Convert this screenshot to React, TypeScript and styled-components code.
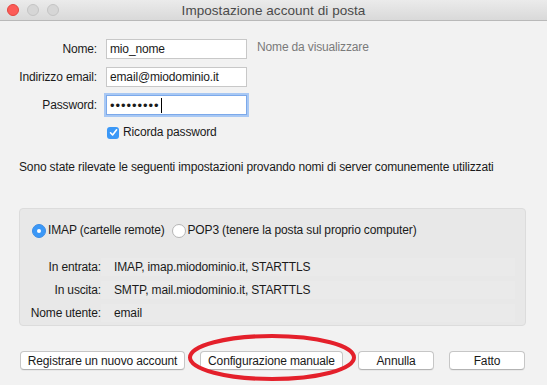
import React from "react";
import styled, { createGlobalStyle } from "styled-components";

const GlobalStyle = createGlobalStyle`
  html, body {
    margin: 0;
    padding: 0;
    background: #f2f2f2;
  }
  body {
    font-family: "Liberation Sans", Arial, sans-serif;
    font-size: 12px;
    line-height: 15px;
    letter-spacing: -0.15px;
    color: #1a1a1a;
  }
`;

const Window = styled.div`
  position: relative;
  width: 547px;
  height: 385px;
  background: #f2f2f2;
  overflow: hidden;
`;

const TitleBar = styled.div`
  position: relative;
  height: 21px;
  background: linear-gradient(#ebebeb, #d9d9d9);
  border-bottom: 1px solid #b9b9b9;
  box-sizing: border-box;
  display: flex;
  align-items: center;
  justify-content: center;
`;

const Lights = styled.div`
  position: absolute;
  left: 7px;
  top: 4px;
  display: flex;
  gap: 8px;
`;

const Light = styled.span<{ $color: string; $edge: string }>`
  width: 12px;
  height: 12px;
  border-radius: 50%;
  box-sizing: border-box;
  background: ${(p) => p.$color};
  border: 1px solid ${(p) => p.$edge};
`;

const Title = styled.div`
  font-size: 13.5px;
  letter-spacing: 0.05px;
  color: #4a4a4a;
`;

const Content = styled.div`
  padding: 18px 21px 0 19px;
`;

const Form = styled.div`
  display: grid;
  grid-template-columns: 78px 141px auto;
  column-gap: 9px;
  row-gap: 8px;
  align-items: center;
`;

const Label = styled.div`
  text-align: right;
  white-space: nowrap;
`;

const Field = styled.div<{ $focus?: boolean }>`
  height: 20px;
  box-sizing: border-box;
  background: #fff;
  border: 1px solid ${(p) => (p.$focus ? "#7ca9ea" : "#c8c8c8")};
  box-shadow: ${(p) => (p.$focus ? "0 0 0 2px #a8c8f4" : "none")};
  padding: 0 3px;
  display: flex;
  align-items: center;
`;

const Dots = styled.span`
  font-size: 13px;
  letter-spacing: 0.95px;
`;

const Caret = styled.span`
  width: 1px;
  height: 15px;
  background: #000;
  margin-left: 1px;
`;

const Hint = styled.div`
  color: #7a7a7a;
  margin-left: 1px;
  margin-top: -4px;
`;

const CheckRow = styled.div`
  grid-column: 2 / 4;
  display: flex;
  align-items: center;
  gap: 4px;
  margin-top: 2px;
  margin-left: 1px;
`;

const Check = styled.span`
  width: 12px;
  height: 12px;
  border-radius: 3px;
  background: #3b98f7;
  display: flex;
  align-items: center;
  justify-content: center;
`;

const Info = styled.p`
  margin: 20px 0 0 0;
  white-space: nowrap;
`;

const Panel = styled.div`
  margin-top: 33px;
  height: 118px;
  background: #e8e8e8;
  border: 1px solid #dcdcdc;
  border-radius: 4px;
  box-sizing: border-box;
  padding: 14px 10px 0 12px;
`;

const RadioRow = styled.div`
  display: flex;
  align-items: center;
`;

const Radio = styled.span<{ $on?: boolean }>`
  width: 14px;
  height: 14px;
  border-radius: 50%;
  box-sizing: border-box;
  background: ${(p) => (p.$on ? "#3b98f7" : "#fff")};
  border: 1px solid ${(p) => (p.$on ? "#3b8de6" : "#b5b5b5")};
  display: flex;
  align-items: center;
  justify-content: center;
  margin-right: 2px;
  &::after {
    content: "";
    display: ${(p) => (p.$on ? "block" : "none")};
    width: 4px;
    height: 4px;
    border-radius: 50%;
    background: #fff;
  }
`;

const RadioText = styled.span`
  margin-right: 7px;
`;

const Details = styled.div`
  margin-top: 20px;
  margin-left: -12px;
  display: grid;
  grid-template-columns: 81px 1fr;
  row-gap: 5px;
`;

const DLabel = styled.div`
  text-align: right;
  height: 18px;
  line-height: 18px;
`;

const DValue = styled.div`
  height: 18px;
  line-height: 18px;
  padding-left: 13px;
  background: #eaeaea;
`;

const Buttons = styled.div`
  display: flex;
  gap: 15px;
  margin-top: 25px;
  margin-left: 1px;
`;

const Button = styled.button<{ $w: number }>`
  width: ${(p) => p.$w}px;
  height: 19px;
  padding: 0;
  background: #fff;
  border: 1px solid #c6c6c6;
  border-bottom-color: #b3b3b3;
  border-radius: 4px;
  box-shadow: 0 1px 0 rgba(0, 0, 0, 0.04);
  font-family: "Liberation Sans", Arial, sans-serif;
  font-size: 12px;
  letter-spacing: -0.15px;
  white-space: nowrap;
  color: #1a1a1a;
`;

const Mark = styled.svg`
  position: absolute;
  left: 186px;
  top: 332px;
  pointer-events: none;
`;

export default function App() {
  return (
    <Window>
      <GlobalStyle />
      <TitleBar>
        <Lights>
          <Light $color="#fc5b57" $edge="#e2463f" />
          <Light $color="#d6d6d6" $edge="#c4c4c4" />
          <Light $color="#d6d6d6" $edge="#c4c4c4" />
        </Lights>
        <Title>Impostazione account di posta</Title>
      </TitleBar>
      <Content>
        <Form>
          <Label>Nome:</Label>
          <Field>mio_nome</Field>
          <Hint>Nome da visualizzare</Hint>
          <Label>Indirizzo email:</Label>
          <Field>email@miodominio.it</Field>
          <div />
          <Label>Password:</Label>
          <Field $focus>
            <Dots>•••••••••</Dots>
            <Caret />
          </Field>
          <div />
          <CheckRow>
            <Check>
              <svg width="9" height="9" viewBox="0 0 9 9">
                <path d="M1.5 4.8 L3.6 7 L7.6 1.8" fill="none" stroke="#fff" strokeWidth="1.6" strokeLinecap="round" strokeLinejoin="round" />
              </svg>
            </Check>
            Ricorda password
          </CheckRow>
        </Form>
        <Info>Sono state rilevate le seguenti impostazioni provando nomi di server comunemente utilizzati</Info>
        <Panel>
          <RadioRow>
            <Radio $on />
            <RadioText>IMAP (cartelle remote)</RadioText>
            <Radio />
            <RadioText>POP3 (tenere la posta sul proprio computer)</RadioText>
          </RadioRow>
          <Details>
            <DLabel>In entrata:</DLabel>
            <DValue>IMAP, imap.miodominio.it, STARTTLS</DValue>
            <DLabel>In uscita:</DLabel>
            <DValue>SMTP, mail.miodominio.it, STARTTLS</DValue>
            <DLabel>Nome utente:</DLabel>
            <DValue>email</DValue>
          </Details>
        </Panel>
        <Buttons>
          <Button $w={165}>Registrare un nuovo account</Button>
          <Button $w={143}>Configurazione manuale</Button>
          <Button $w={76}>Annulla</Button>
          <Button $w={76}>Fatto</Button>
        </Buttons>
      </Content>
      <Mark width="172" height="52" viewBox="0 0 172 52">
        <ellipse cx="86" cy="25.5" rx="82" ry="21.5" fill="none" stroke="#e4202b" strokeWidth="4" />
      </Mark>
    </Window>
  );
}
